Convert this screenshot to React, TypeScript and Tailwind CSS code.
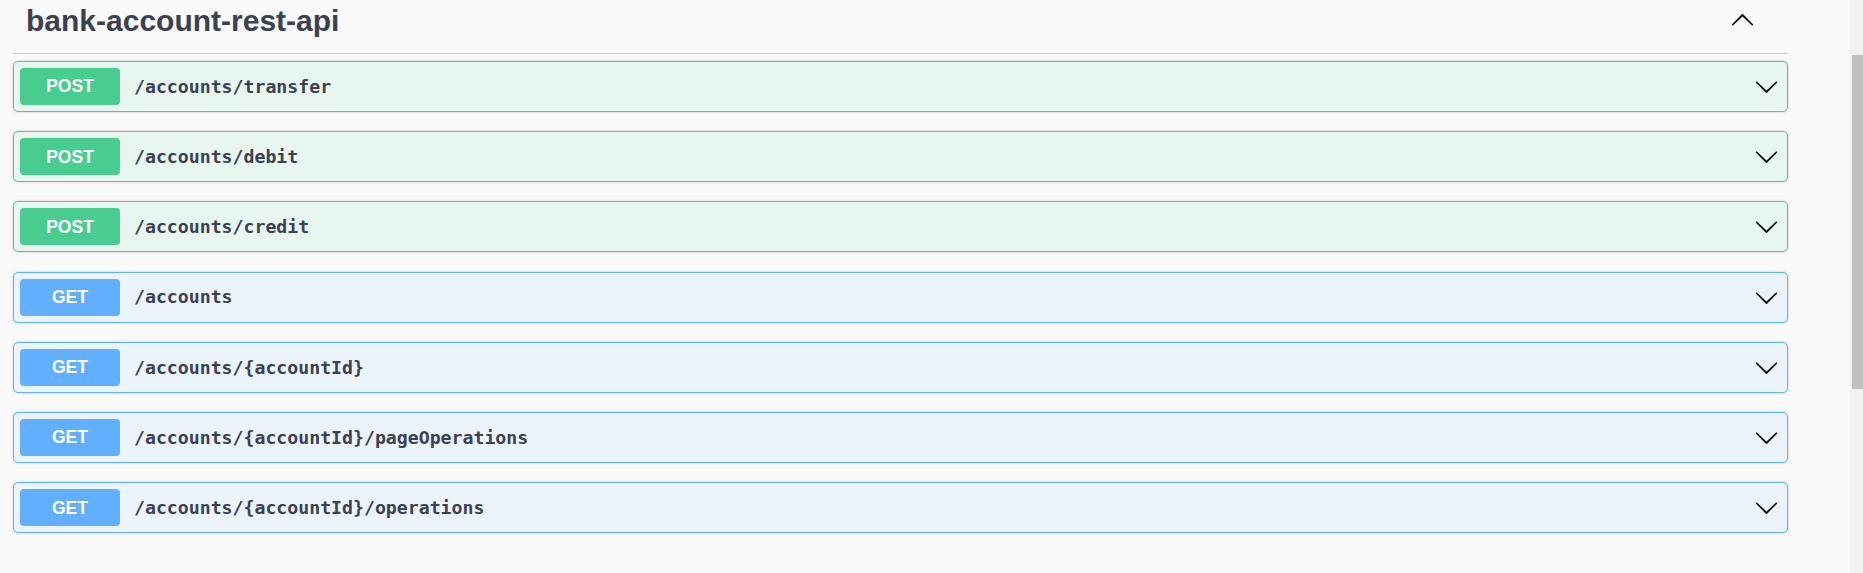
import React from "react";

type Op = { method: "POST" | "GET"; path: string };

const ops: Op[] = [
  { method: "POST", path: "/accounts/transfer" },
  { method: "POST", path: "/accounts/debit" },
  { method: "POST", path: "/accounts/credit" },
  { method: "GET", path: "/accounts" },
  { method: "GET", path: "/accounts/{accountId}" },
  { method: "GET", path: "/accounts/{accountId}/pageOperations" },
  { method: "GET", path: "/accounts/{accountId}/operations" },
];

const ArrowDown = ({ up = false }: { up?: boolean }) => (
  <svg
    width="25"
    height="25"
    viewBox="0 0 20 20"
    className={up ? "rotate-180 shrink-0" : "shrink-0"}
    aria-hidden="true"
  >
    <path
      fill="#111"
      d="M17.418 6.109c.272-.268.709-.268.979 0s.271.701 0 .969l-7.908 7.83c-.27.268-.707.268-.979 0l-7.908-7.83c-.27-.268-.27-.701 0-.969.271-.268.709-.268.979 0L10 13.25l7.418-7.141z"
    />
  </svg>
);

function OpRow({ op }: { op: Op }) {
  const post = op.method === "POST";
  return (
    <div
      className={
        post
          ? "flex h-[51px] items-center rounded-[5px] border border-[#49cc90] bg-[#e8f6f0] pl-[6px] pr-[8px] shadow-[0_0_3px_rgba(0,0,0,0.19)]"
          : "flex h-[51px] items-center rounded-[5px] border border-[#61affe] bg-[#ebf3fb] pl-[6px] pr-[8px] shadow-[0_0_3px_rgba(0,0,0,0.19)]"
      }
    >
      <div
        className={
          post
            ? "flex h-[37px] w-[100px] shrink-0 items-center justify-center rounded-[4px] bg-[#49cc90] text-[17.5px] font-bold text-white [font-family:'Liberation_Sans',Arial,sans-serif]"
            : "flex h-[37px] w-[100px] shrink-0 items-center justify-center rounded-[4px] bg-[#61affe] text-[17.5px] font-bold text-white [font-family:'Liberation_Sans',Arial,sans-serif]"
        }
      >
        {op.method}
      </div>
      <div className="flex-1 pl-[14px] text-[18.2px] font-bold text-[#3b4151] [font-family:'DejaVu_Sans_Mono','Liberation_Mono',monospace]">
        {op.path}
      </div>
      <ArrowDown />
    </div>
  );
}

export default function App() {
  return (
    <div className="flex h-[573px] w-full overflow-hidden bg-[#fafafa]">
      <div className="flex-1 pl-[13px] pr-[62px]">
        <div className="flex h-[54px] items-start justify-between border-b border-[#c9cacd] pl-[13px] pr-[33px]">
          <h3 className="pt-[3px] text-[30px] leading-[36px] font-bold text-[#3b4151] [font-family:'Liberation_Sans',Arial,sans-serif]">
            bank-account-rest-api
          </h3>
          <div className="mt-[8px]">
            <ArrowDown up />
          </div>
        </div>
        <div className="mt-[7px] flex flex-col gap-[19.2px]">
          {ops.map((op) => (
            <OpRow key={op.path} op={op} />
          ))}
        </div>
      </div>
      <div className="flex w-[13px] flex-col bg-[#f1f1f1]">
        <div className="h-[55px]" />
        <div className="ml-[2px] h-[334px] bg-[#c1c1c1]" />
      </div>
    </div>
  );
}
